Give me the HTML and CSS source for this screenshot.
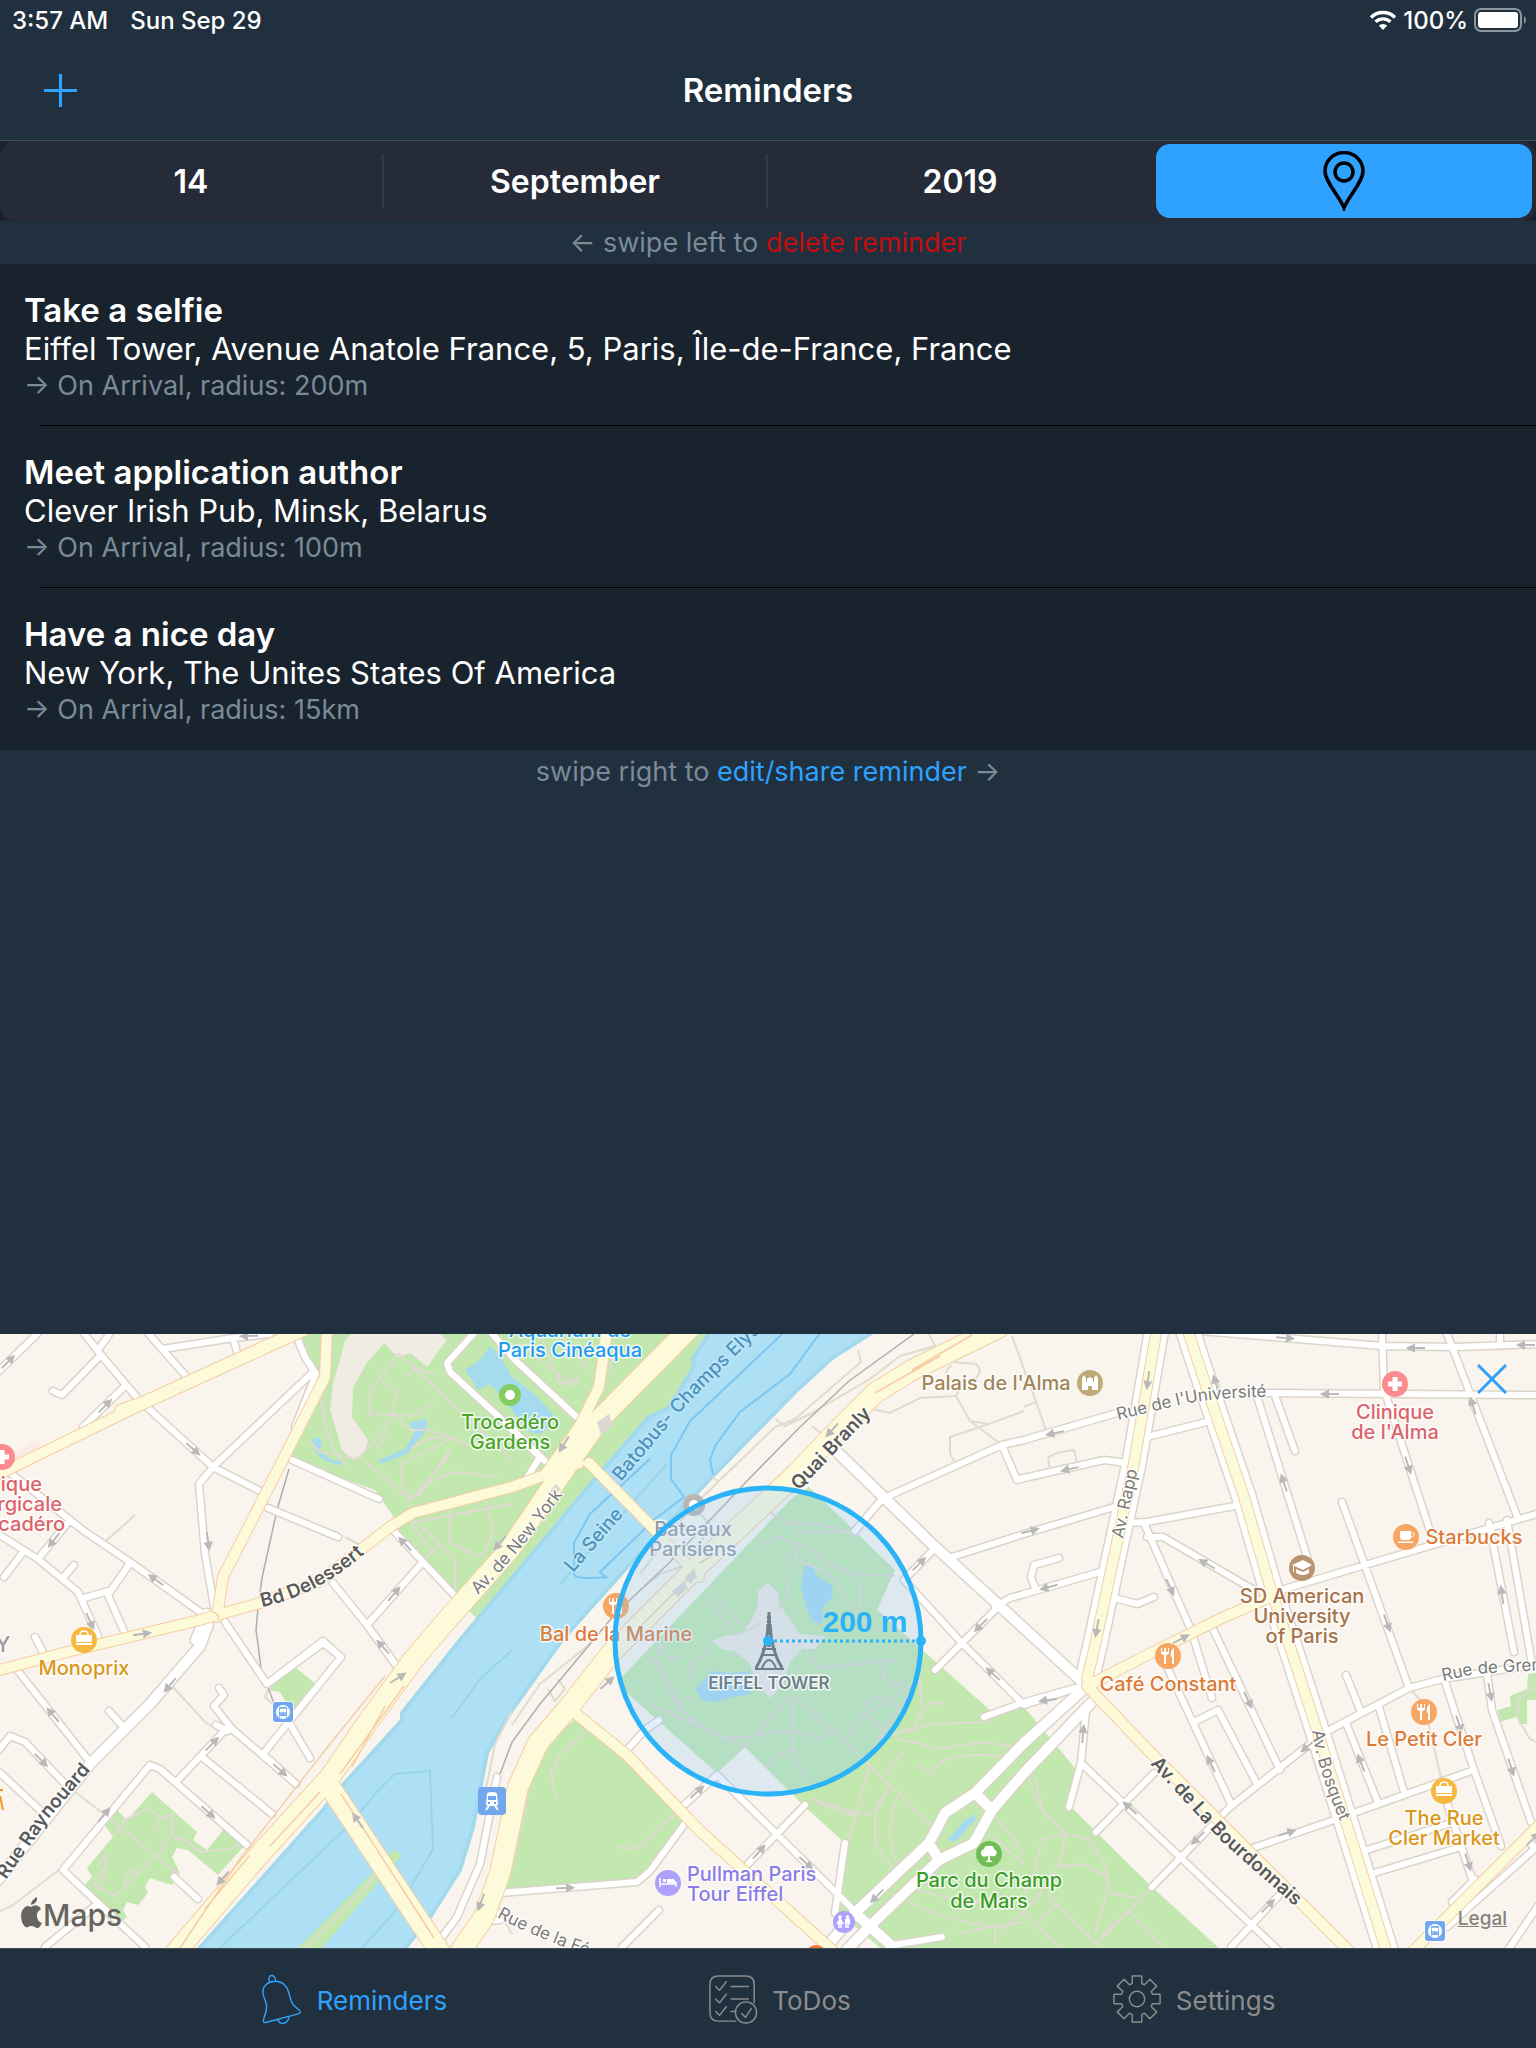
FILE: index.html
```html
<!DOCTYPE html>
<html lang="en">
<head>
    <meta charset="UTF-8">
    <meta name="viewport" content="width=device-width, initial-scale=1.0">
    <title>Reminders</title>
    <link rel="stylesheet" href="styles.css">
</head>
<body>
    <div class="status-bar">
        <div class="status-left">
            <span>3:57 AM</span>
            <span>Sun Sep 29</span>
        </div>
        <div class="status-right">
            <svg class="wifi" viewBox="0 0 28 20" aria-hidden="true">
                <path d="M2 7.500A17 17 0 0 1 26 7.500M6.500 11.800A11 11 0 0 1 21.500 11.800" fill="none" stroke="#fff" stroke-width="3.400"/>
                <path d="M14 20L9.800 15.600A6 6 0 0 1 18.200 15.600Z" fill="#fff"/>
            </svg>
            <span>100%</span>
            <svg class="battery" viewBox="0 0 54 24" aria-hidden="true">
                <rect x="1" y="1" width="46" height="22" rx="6" fill="none" stroke="#8d959d" stroke-width="2"/>
                <rect x="4" y="4" width="40" height="16" rx="3" fill="#fff"/>
                <path d="M50 8a5 5 0 0 1 0 8z" fill="#8d959d"/>
            </svg>
        </div>
    </div>

    <header class="header">
        <button class="add-btn" aria-label="Add reminder">
            <svg viewBox="0 0 32 32"><path d="M16 0V32M0 16H32" stroke="#2fa2ff" stroke-width="3"/></svg>
        </button>
        <h1>Reminders</h1>
    </header>

    <div class="segments-wrap">
        <div class="segments">
            <button class="segment">14</button>
            <button class="segment">September</button>
            <button class="segment">2019</button>
            <button class="segment active" aria-label="Location">
                <svg viewBox="0 0 42 60">
                    <path d="M21 57C17 46 2 31 2 20A19 18.500 0 0 1 40 20C40 31 25 46 21 57Z" fill="none" stroke="#000" stroke-width="3.500"/>
                    <circle cx="21" cy="21" r="9" fill="none" stroke="#000" stroke-width="3.500"/>
                </svg>
            </button>
        </div>
    </div>

    <main>
        <p class="hint">← swipe left to <span class="delete">delete reminder</span></p>
        <ul class="reminders">
            <li class="reminder">
                <h2>Take a selfie</h2>
                <p class="place">Eiffel Tower, Avenue Anatole France, 5, Paris, Île-de-France, France</p>
                <p class="radius">→ On Arrival, radius: 200m</p>
            </li>
            <li class="reminder">
                <h2>Meet application author</h2>
                <p class="place">Clever Irish Pub, Minsk, Belarus</p>
                <p class="radius">→ On Arrival, radius: 100m</p>
            </li>
            <li class="reminder">
                <h2>Have a nice day</h2>
                <p class="place">New York, The Unites States Of America</p>
                <p class="radius">→ On Arrival, radius: 15km</p>
            </li>
        </ul>
        <p class="hint">swipe right to <span class="edit">edit/share reminder</span> →</p>
    </main>

    <section class="map" aria-label="Map">
        <svg class="map-canvas" viewBox="0 0 1536 614" preserveAspectRatio="xMidYMid slice">
            <defs>
                <path id="one-way" d="M-9 0H3M2-3L8 0L2 3Z"/>

                <path id="streets" d="M37 0L-2 38M83-2L101 21L139 66L213 133L264 159M110-1L101 12L97 16M101 21L62 61L53 57M123 54L83 93V100M147-2L185 41M163 15L233 4L270 0M233 4L237 18M298 6L305 23L316 40L295 93M313 38L213 133L199 150L205 220L215 278M268 174L338 203M292 126L379 165M8 137L70 186L84 197L130 228L203 280M70 186L38 225M-2 200L38 225L78 258L98 302M24 217L4 243M74 231L62 245M130 229L108 261L126 302M81 265L108 257M35 303L48 328M393 196L455 262M422 229L367 291M333 249L367 291L398 334M225 288L267 350L323 309L341 323L263 420L296 450M267 350L323 307L341 323M290 390L310 424M18 337L90 428M109 377L125 395M-2 417L10 402L25 408L65 450M-2 437L42 478M219 354L224 361L214 372L232 395L296 450M216 391L228 397M228 393L177 447M202 423L272 480M145 613L63 536L150 431L160 435L247 511M97 570L45 613M174 543L198 565M497 443L480 530L457 583L440 606M498 559L512 558L637 548L650 537L686 488M488 570L500 580M480 588L500 586M475-2L447 29L450 38L512 95L545 127M490-3L515 26L580 86M512 96L540 123L528 142M882 165L855 197M882 165L1002 111L1024 106L1117 79M1002 111L1017 146L1024 144L1104 126L1127 129M952 223L1024 200L1114 173M995 273L1010 264L1024 260L1107 236M1059 224L1034 231L1031 243L1036 256M1111 263L1137 270L1154 263M1147 103L1214 86M1127 189L1147 188L1240 171M1144 189L1191 296L1212 364M1147 203L1163 203L1254 256M1212 293L1280 436M1167 333L1232 472M1194 388L1218 376L1257 450M1200-3L1382 12L1456 13L1540 10M1382-2L1384 55L1430 197M1446-3L1517 182M1500-2V12M1256 59L1540 61M1256 59L1308 226M1274 59L1295 117M1342 168L1409 354M1281 256L1540 179M1489 189L1514 318M1507 186L1532 330M1152 553L1230 473L1324 399L1409 354L1442 345L1540 330M1096 498L1154 439M1069 473L1081 429L1086 376M1081 429L1278 616M1231 613L1285 555M1247 516L1334 486L1474 436M1346 389L1377 466M1379 373L1404 458M1346 341L1361 378M1444 345L1474 436L1501 512M1487 340L1492 376L1531 488M1367 516L1454 488M1374 539L1461 513M1447 469L1472 545M1540 569L1508 616M625 418L645 396L659 386M682 473L717 441L889 611M745 533L805 471M845 509L835 579M622 613L659 576M935 336L962 309L995 276M935 214L904 246L962 309L1022 369M984 383L1022 369L1075 354M1077 354L1024 371M893 611L942 603M1475 545L1452 568M1540 510L1447 593M1531 510L1545 520"/>
                <path id="avenues" d="M208 290L200 312L150 370L90 430L-4 548M835 116L932 210L1087 352M1087 352L1024 409L975 459L945 479L929 509L855 579L824 616M1091 369L1024 439L992 476L974 509L939 526L869 593L846 617M975 459L992 476M929 509L939 526M855 579L893 613M207 280L196 306"/>
                <path id="boulevards" d="M1157-6L1134 129L1094 316L1087 345M1187-6L1198 28L1244 163L1271 256L1291 316L1317 396L1357 523L1386 616"/>
                <path id="majors" d="M-5 142L130 76L277 9L310-6M120 76L145 67L300-4M327-4L325 43L223 243L217 283M-4 337L67 318L200 286L217 281L260 269L318 248L363 214L390 193L413 179L512 153L545 141L579 129M607-4L599 53L579 93L545 141M589 129L655 196L699 243M575 379L627 421L699 496L832 616M1087 352L1157 316L1224 283L1271 263M1087 352L1151 419L1291 559L1350 618M1540 490L1412 618"/>
                <path id="highways" d="M690-6L599 86L570 127L510 215L447 286L413 326L370 385L330 443L260 520L176 618M998-6L912 36L875 59L839 95L795 141L699 231L612 318L569 373L538 409L518 453L500 539L484 583L460 618M330 453L440 618"/>

                <path id="t-batobus" d="M621 148L665 96Q680 78 700 57L780-22"/>
                <path id="t-seine" d="M573 239L640 162"/>
                <path id="t-branly" d="M799 157L885 66"/>
                <path id="t-newyork" d="M478 261Q522 218 576 142"/>
                <path id="t-delessert" d="M262 273Q325 260 378 207"/>
                <path id="t-universite" d="M1118 86L1175 72Q1215 62 1290 63"/>
                <path id="t-rapp" d="M1123 205L1142 115"/>
                <path id="t-bourdonnais" d="M1150 430L1221 507L1315 590"/>
                <path id="t-bosquet" d="M1312 397Q1318 440 1348 505"/>
                <path id="t-grenelle" d="M1443 347L1475 340L1560 335"/>
                <path id="t-raynouard" d="M6 546L50 483L110 414"/>
                <path id="t-federation" d="M497 583Q540 607 620 632"/>
            </defs>

            <!-- ground -->
            <rect width="1536" height="614" fill="#f9f4ed"/>
            <g class="park">
                <path d="M300 0L316 42L290 126L375 156L393 182V196L455 262L477 285L512 244L575 169L594 146L640 93L649 83L669 74L695 31L692 26L712 0Z"/>
                <path d="M152 458L197 498L193 506L207 516L223 496L245 511L218 541L188 516L177 514L172 523L180 539L172 551L150 544L145 553L148 559L138 571L127 568L123 576L127 583L120 589L83 553L92 543L87 534L113 503L103 488L115 474L127 486Z"/>
                <path d="M295 333L317 351L293 378L287 370L280 358L268 356Z"/>
                <path d="M574 386L627 421L684 476L685 489L649 539L637 551L512 559L500 556L503 539L522 453L539 419Z"/>
                <path d="M627 359L717 439L745 413L805 473L845 509L835 575L880 614H1219L1152 553L1071 473L1024 373L925 329L919 313L877 276L895 236L809 153L790 166L620 345Z"/>
                <path d="M925 329L1024 373L1071 473L1085 400L1075 372L1060 358L1024 372L984 383Z" class="ground"/>
                <path d="M919 313L1000 385L1024 373L1080 440L1069 473L1040 560L900 400Z"/>
                <path d="M1540 338L1528 340L1527 355L1510 362L1511 372L1498 376L1500 388L1519 382V390H1527V366H1540Z"/>
            </g>
            <path d="M350 0H440L447 6L427 33L410 19L397 23L384 9L367 29L353 53L352 83L368 106L365 118L353 126L342 116L330 76L333 49L340 26L345 6Z" fill="#f0ebe3"/>
            <path d="M13 119L37 106L45 115L18 130Z" fill="#fbeae7"/>

            <!-- the Seine -->
            <path class="water-edge" d="M712-5L692 26L695 31L669 74L649 83L640 93L594 146L512 244L460 306L402 379V386L343 451L323 476L196 618H402L430 583L460 536L473 493L487 419L512 376L562 306L622 239L712 143L795 58L832 24L876-4Z"/>
            <path class="park-strip" d="M393 515L402 521L322 614H298L388 523Z"/>
            <g class="water">
                <path d="M465 36L480 26L490 12L500 22L512 43L534 60L553 80L552 92L540 100L530 98L516 82L500 60L490 50L478 56L472 46Z"/>
                <path d="M312 108Q314 102 320 104L322 110L319 116L330 125L345 129L338 131L322 125L315 117Z"/>
                <path d="M427 84L426 97L411 114L407 120L380 130L378 127L393 120L405 115L415 98L409 89Z"/>
                <path d="M804 232L812 231L818 243L832 251L833 262L822 275L823 290L812 287L806 272L801 255Z"/>
                <path d="M695 355L712 337L728 339L750 337L750 360L728 364L715 368L702 366Z"/>
                <path d="M947 506L965 486L975 480V486L955 508Z"/>
            </g>
            <path d="M768 249L778 258L779 270L790 285L800 300L826 302L815 315H802L790 328L783 352L770 364L756 350L750 330L736 318L722 315L711 307L725 302L742 300L752 285L758 270V257Z" fill="#ece8e2"/>

            <g class="ferry">
                <path d="M782 0L740 40L690 87L671 121V145L684 163L655 185L600 238L606 243Q575 246 574 240V209L590 180L650 125M820-1L790 40L740 78L715 112L710 126L713 141"/>
            </g>
            <path d="M512 316L480 345L468 362L452 384M220 614L345 495M362 614L400 572L433 515L430 437L395 440L375 460L345 497M667 130L560 250" class="current"/>

            <!-- paths in the parks -->
            <g class="footpath">
                <path d="M398 19L371 57L369 80L412 82L433 69M378 44L397 56L392 82L380 101L358 125L320 118L310 108M398 19L450 68L512 125M407 42L416 34L433 40M398 80L402 90L411 96L426 96L455 104L470 112M389 100L376 116M411 114L430 104H453L402 130V150L410 165L420 160L450 115M365 127L410 165V173M418 158L450 120M410 165L435 145L455 138L500 143M292 128L340 150M322 55Q320 100 345 132M411 189L512 170M450 176L449 208L470 219L480 222Q500 205 485 165M411 189L434 220M425 224L438 212M455 262V228L420 190M540 0L560 50L580 44M520 10L572 52L580 44M560 0L590 38M610 40L612 25L640 15"/>
                <path d="M108 483L178 540M113 503L125 486L148 474L162 484L172 480L173 497L160 518L115 562L93 550L108 530L105 520L98 533M162 484L153 497M165 492L178 506L183 504L200 518L230 515L245 509M125 551V543L133 536L138 540M107 527L100 556M305 614L378 540"/>
                <path d="M570 390Q530 415 528 460L512 535M588 396L560 420L551 438L556 465M616 513L632 515L643 510L660 492L684 475"/>
                <path d="M770 178L800 197L855 199M782 188L820 190L860 202M760 211L780 203L805 213L830 230L850 240L895 242M800 211L795 225L830 240L848 270L870 295M790 213L788 260L778 275M860 245L860 275L880 300M717 265L740 290M704 260L737 302M740 300L760 290M650 325L660 330L667 350L690 385L720 403H750L770 398H800L820 405L833 396M660 335L680 375L710 400M655 330L660 310L670 325L680 323M650 345V370L745 413L790 362M683 363L690 365M690 345Q685 330 710 318M793 362V415L797 430L807 445M766 433L780 420L793 415M793 362L845 407L865 380L890 400M804 314L818 334L897 326M862 380L870 365L880 364L900 375M883 330L884 345L897 352L905 346M845 407L930 490M865 380L920 346M878 405L920 345L922 378L910 400M875 405L930 390L990 388M920 382Q925 365 945 370M895 405Q930 410 935 415L985 408L1024 415M870 432L856 479L815 466M856 479L870 480L890 452M856 479L848 510M812 464Q835 480 856 481M890 452L875 480V510L893 535M900 458Q885 490 893 520L897 530M930 440Q940 420 980 421L1003 422M903 419L885 440M917 430L930 440M1024 430L1034 460L1045 478L1065 500L1060 530L1040 560L1000 600M1034 440L1043 478L1066 500L1090 505L1105 530L1109 550L1095 600M1041 510L1035 535L1024 560M1066 500L1041 506M1060 532L1084 530L1105 542L1112 560L1138 564M1048 560L1100 614M1098 608L1150 555M1059 568L1036 592M1100 603L1128 576L1165 614M1024 580L1060 614M905 565Q950 590 995 592L1024 588M915 555L970 570L1000 560M958 600L995 592V612M985 470L1010 500L1024 520M989 500L1024 530"/>
                <path d="M1540 350L1518 365V385L1530 405L1540 410"/>
            </g>
            <g class="lane">
                <path d="M135 181L106 207M345 203L362 212M172 352L206 389L215 394M75 458L108 483M60 535L12 572L0 577M268 356L265 363L275 372M712 143L719 148M858 16L861 28L795 85L775 93L690 175L640 240M775 85L785 92L810 80L870 45L900 22L935 12L928-2M812 92L822 100M872 75L890 79L920 64L956 62L970 87L1002 111M956 62L962 50M952 31Q940 40 953 46L972 48Q985 38 976 30L953 28L948 20M970 87L989 90L1024 77M989 90L950 103V120L957 132M1012 2L1036 68L1046 96M1024 73L1036 68M1048 123L1050 137M1048 123L1060 118L1074 116L1077 128M1409 354L1424 370L1444 457L1450 475M512 391L540 350L590 310M512 376L495 410L485 460M512 600L490 560M548 355L555 367L565 355L558 345M640 256L660 240L690 230L710 190L700 180"/>
            </g>
            <path d="M289 135L277 176L262 244L258 274L256 296L258 310L261 335L275 372" class="rail"/>
            <path d="M914 0L849 47L799 94L745 149L730 165L668 230L615 280L540 370L512 408L500 440" class="rail"/>

            <!-- roads, casing first and then the surface -->
            <use href="#streets" class="street-edge"/>
            <use href="#avenues" class="avenue-edge"/>
            <use href="#boulevards" class="boulevard-edge"/>
            <use href="#streets" class="street"/>
            <use href="#avenues" class="avenue"/>
            <use href="#boulevards" class="boulevard"/>
            <use href="#boulevards" class="major-edge"/>
            <use href="#majors" class="major-edge"/>
            <use href="#highways" class="highway-edge"/>
            <use href="#majors" class="major"/>
            <use href="#boulevards" class="major"/>
            <use href="#highways" class="highway"/>
            <g class="median">
                <path d="M385 342L330 410L240 525L180 614M404 352L340 440M320 458L270 512M250 521L205 575M341 460L434 604M385 372L352 433M912 36L972 1M875 59L940 22M700 229L712 222M685 245L695 235M690 243L640 293"/>
                <path d="M213 278Q220 280 218 287"/>
            </g>
            <path d="M597 88L609 80L613 91L601 101Z" fill="#dcd8d1"/>
            <path d="M686 243L694 236L697 243L690 250Z" fill="#dcd8d1"/>
            <path d="M672 257L684 247L688 254L678 263Z" fill="#dcd8d1"/>
            <path d="M550 157L556 150L561 155L552 163Z" fill="#dcd8d1"/>

            <g class="one-ways">
                <use href="#one-way" transform="translate(8 28) rotate(-45)"/>
                <use href="#one-way" transform="translate(249 2) rotate(178)"/>
                <use href="#one-way" transform="translate(105 72) rotate(-45)"/>
                <use href="#one-way" transform="translate(193 115) rotate(42)"/>
                <use href="#one-way" transform="translate(208 207) rotate(82)"/>
                <use href="#one-way" transform="translate(54 206) rotate(128)"/>
                <use href="#one-way" transform="translate(156 246) rotate(216)"/>
                <use href="#one-way" transform="translate(90 287) rotate(65)"/>
                <use href="#one-way" transform="translate(142 300) rotate(-8)"/>
                <use href="#one-way" transform="translate(405 210) rotate(228)"/>
                <use href="#one-way" transform="translate(394 260) rotate(-50)"/>
                <use href="#one-way" transform="translate(500 209) rotate(130)"/>
                <use href="#one-way" transform="translate(383 313) rotate(228)"/>
                <use href="#one-way" transform="translate(398 344) rotate(-32)"/>
                <use href="#one-way" transform="translate(170 351) rotate(130)"/>
                <use href="#one-way" transform="translate(53 381) rotate(230)"/>
                <use href="#one-way" transform="translate(41 426) rotate(45)"/>
                <use href="#one-way" transform="translate(212 410) rotate(-45)"/>
                <use href="#one-way" transform="translate(280 436) rotate(42)"/>
                <use href="#one-way" transform="translate(208 478) rotate(42)"/>
                <use href="#one-way" transform="translate(104 481) rotate(-50)"/>
                <use href="#one-way" transform="translate(358 487) rotate(235)"/>
                <use href="#one-way" transform="translate(223 544) rotate(132)"/>
                <use href="#one-way" transform="translate(481 568) rotate(110)"/>
                <use href="#one-way" transform="translate(565 554) rotate(-2)"/>
                <use href="#one-way" transform="translate(564 110) rotate(122)"/>
                <use href="#one-way" transform="translate(832 96) rotate(132)"/>
                <use href="#one-way" transform="translate(607 349) rotate(-42)"/>
                <use href="#one-way" transform="translate(697 458) rotate(-42)"/>
                <use href="#one-way" transform="translate(759 518) rotate(-48)"/>
                <use href="#one-way" transform="translate(806 529) rotate(42)"/>
                <use href="#one-way" transform="translate(877 562) rotate(135)"/>
                <use href="#one-way" transform="translate(919 230) rotate(-45)"/>
                <use href="#one-way" transform="translate(981 291) rotate(135)"/>
                <use href="#one-way" transform="translate(993 340) rotate(222)"/>
                <use href="#one-way" transform="translate(1055 99) rotate(168)"/>
                <use href="#one-way" transform="translate(1070 135) rotate(168)"/>
                <use href="#one-way" transform="translate(1030 197) rotate(-15)"/>
                <use href="#one-way" transform="translate(1049 253) rotate(165)"/>
                <use href="#one-way" transform="translate(1148 46) rotate(98)"/>
                <use href="#one-way" transform="translate(1097 294) rotate(100)"/>
                <use href="#one-way" transform="translate(1216 50) rotate(253)"/>
                <use href="#one-way" transform="translate(1285 4) rotate(4)"/>
                <use href="#one-way" transform="translate(1416 14) rotate(180)"/>
                <use href="#one-way" transform="translate(1526 11) rotate(180)"/>
                <use href="#one-way" transform="translate(1330 60) rotate(180)"/>
                <use href="#one-way" transform="translate(1284 149) rotate(252)"/>
                <use href="#one-way" transform="translate(1408 131) rotate(72)"/>
                <use href="#one-way" transform="translate(1473 72) rotate(252)"/>
                <use href="#one-way" transform="translate(1207 230) rotate(210)"/>
                <use href="#one-way" transform="translate(1170 253) rotate(65)"/>
                <use href="#one-way" transform="translate(1181 305) rotate(-28)"/>
                <use href="#one-way" transform="translate(1387 289) rotate(70)"/>
                <use href="#one-way" transform="translate(1502 261) rotate(262)"/>
                <use href="#one-way" transform="translate(1048 366) rotate(172)"/>
                <use href="#one-way" transform="translate(1083 400) rotate(-85)"/>
                <use href="#one-way" transform="translate(1248 366) rotate(65)"/>
                <use href="#one-way" transform="translate(1211 430) rotate(245)"/>
                <use href="#one-way" transform="translate(1308 412) rotate(140)"/>
                <use href="#one-way" transform="translate(1361 429) rotate(248)"/>
                <use href="#one-way" transform="translate(1459 390) rotate(72)"/>
                <use href="#one-way" transform="translate(1490 358) rotate(80)"/>
                <use href="#one-way" transform="translate(1511 433) rotate(72)"/>
                <use href="#one-way" transform="translate(1130 474) rotate(222)"/>
                <use href="#one-way" transform="translate(1198 504) rotate(135)"/>
                <use href="#one-way" transform="translate(1287 499) rotate(-18)"/>
                <use href="#one-way" transform="translate(1468 528) rotate(72)"/>
                <use href="#one-way" transform="translate(1268 572) rotate(-45)"/>
                <use href="#one-way" transform="translate(1533 505) rotate(-45)"/>
            </g>

            <!-- street names -->
            <g class="road-name">
                <text><textPath href="#t-newyork">Av. de New York</textPath></text>
                <text><textPath href="#t-universite">Rue de l'Université</textPath></text>
                <text><textPath href="#t-rapp">Av. Rapp</textPath></text>
                <text><textPath href="#t-bosquet">Av. Bosquet</textPath></text>
                <text><textPath href="#t-grenelle">Rue de Gren</textPath></text>
                <text><textPath href="#t-federation">Rue de la Fé</textPath></text>
            </g>
            <g class="road-name bold">
                <text><textPath href="#t-branly">Quai Branly</textPath></text>
                <text><textPath href="#t-delessert">Bd Delessert</textPath></text>
                <text><textPath href="#t-bourdonnais">Av. de La Bourdonnais</textPath></text>
                <text><textPath href="#t-raynouard">Rue Raynouard</textPath></text>
            </g>
            <g class="water-name">
                <text><textPath href="#t-batobus">Batobus- Champs Elys</textPath></text>
                <text><textPath href="#t-seine">La Seine</textPath></text>
            </g>

            <!-- places -->
            <g class="poi blue">
                <text x="570" y="3">Aquarium de</text>
                <text x="570" y="23">Paris Cinéaqua</text>
            </g>
            <g class="poi green">
                <circle cx="510" cy="61" r="11" fill="#85cc63"/>
                <circle cx="510" cy="61" r="5" fill="#fff"/>
                <text x="510" y="95">Trocadéro</text>
                <text x="510" y="115">Gardens</text>
            </g>
            <g class="poi dark-green">
                <circle cx="989" cy="520" r="13" fill="#71be57"/>
                <path d="M988 519H990V526L993 528H985L988 526Z" fill="#fff"/>
                <path d="M982 522Q979 517 984 515Q985 511 989 512Q994 511 994 515Q999 518 995 522Q992 523 989 521Q985 524 982 522Z" fill="#fff"/>
                <text x="989" y="553">Parc du Champ</text>
                <text x="989" y="574">de Mars</text>
            </g>
            <g class="poi gray">
                <circle cx="694" cy="171" r="11" fill="#b9b5b0"/>
                <circle cx="694" cy="171" r="5" fill="#fff"/>
                <text x="693" y="202">Bateaux</text>
                <text x="693" y="222">Parisiens</text>
                <text x="3" y="318" class="district">Y</text>
            </g>
            <g class="poi tan">
                <circle cx="1090" cy="49" r="13" fill="#bfa975"/>
                <path d="M1082 56V44L1084 41L1086 44V48H1087V45L1090 43L1093 45V48H1094V44L1096 41L1098 44V56H1092V52H1088V56Z" fill="#fff"/>
                <text x="996" y="56">Palais de l'Alma</text>
            </g>
            <g class="poi red">
                <circle cx="1395" cy="50" r="13" fill="#fb8b90"/>
                <path d="M1388 50H1402M1395 43V57" stroke="#fff" stroke-width="5"/>
                <text x="1395" y="85">Clinique</text>
                <text x="1395" y="105">de l'Alma</text>
                <circle cx="2" cy="123" r="13" fill="#fb8b90"/>
                <path d="M-5 123H9M2 116V130" stroke="#fff" stroke-width="5"/>
                <text x="42" y="157" class="end">ique</text>
                <text x="62" y="177" class="end">rgicale</text>
                <text x="65" y="197" class="end">cadéro</text>
            </g>
            <g class="poi brown">
                <circle cx="1302" cy="234" r="13" fill="#ba936f"/>
                <path d="M1292 231L1303 226L1312 231L1303 236Z" fill="#fff"/>
                <path d="M1296 235L1303 238L1309 235V239Q1303 243 1296 239ZM1293 232H1294V238H1293Z" fill="#fff"/>
                <text x="1302" y="269">SD American</text>
                <text x="1302" y="289">University</text>
                <text x="1302" y="309">of Paris</text>
            </g>
            <g class="poi orange">
                <circle cx="1406" cy="203" r="13" fill="#f7a562"/>
                <path d="M1400 197H1411V203Q1411 206 1408 206H1403Q1400 206 1400 203ZM1398 207.500H1413V209H1398Z" fill="#fff"/>
                <path d="M1411 199Q1415 198 1414 201Q1413 203 1411 203" fill="none" stroke="#fff"/>
                <text x="1474" y="210">Starbucks</text>
                <g id="food">
                    <circle cx="1168" cy="322" r="13" fill="#f7a562"/>
                    <path d="M1161 314V318Q1161 321 1164 321V330H1166V321Q1169 321 1169 318V314H1168V318H1166V314H1164V318H1162V314ZM1174 330V314Q1170 316 1171 323H1172V330Z" fill="#fff"/>
                </g>
                <text x="1168" y="357">Café Constant</text>
                <use href="#food" x="256" y="56"/>
                <text x="1424" y="412">Le Petit Cler</text>
                <use href="#food" x="-552" y="-50"/>
                <text x="616" y="307">Bal de la Marine</text>
                <path d="M0 456H3M0 462L3 476" stroke="#f7941e" stroke-width="2"/>
                <circle cx="816" cy="622" r="11" fill="#ee7b34"/>
            </g>
            <g class="poi yellow">
                <g id="bag">
                    <circle cx="84" cy="306" r="13" fill="#f7b83f"/>
                    <path d="M76 301H92V308H76ZM76 309H92V311H76Z" fill="#fff"/>
                    <path d="M80 301Q80 297 84 297Q88 297 88 301" fill="none" stroke="#fff" stroke-width="1.500"/>
                </g>
                <text x="84" y="341">Monoprix</text>
                <use href="#bag" x="1360" y="151"/>
                <text x="1444" y="491">The Rue</text>
                <text x="1444" y="511">Cler Market</text>
            </g>
            <g class="poi purple">
                <circle cx="668" cy="549" r="13" fill="#aea1fb"/>
                <path d="M660 544V553M661 550H676M676 548V553" fill="none" stroke="#fff" stroke-width="1.500"/>
                <path d="M663 545H666V548H663ZM667 545H674L676 549H667Z" fill="#fff"/>
                <text x="687" y="547" class="start">Pullman Paris</text>
                <text x="687" y="567" class="start">Tour Eiffel</text>
                <circle cx="844" cy="588" r="11" fill="#aea1fb"/>
                <path d="M840 585L837 590M840 585L843 590M840 584V588M847 585L845 590M847 585L850 590M848 584V594M846 588V594M839 590V594M841 590V594" stroke="#fff" stroke-width="1.500"/>
                <path d="M840 584L843 590H837ZM845 585H850V589H845Z" fill="#fff"/>
                <circle cx="840" cy="583" r="1.800" fill="#fff"/>
                <circle cx="847.500" cy="583" r="1.800" fill="#fff"/>
            </g>
            <g id="metro">
                <rect x="272" y="367" width="22" height="22" rx="4" fill="#fff" opacity=".7"/>
                <rect x="273" y="368" width="20" height="20" rx="3" fill="#72a7ee"/>
                <circle cx="283" cy="378" r="7" fill="#fff"/>
                <rect x="279" y="373" width="8" height="9" rx="1" fill="#72a7ee"/>
                <path d="M280 375H286V378H280ZM280 380H282M284 380H286" fill="#fff" stroke="#fff" stroke-width=".6"/>
                <path d="M280 382L278 385M286 382L288 385" stroke="#72a7ee"/>
            </g>
            <use href="#metro" x="1152" y="219"/>
            <rect x="478" y="453" width="28" height="28" rx="4" fill="#72a7ee"/>
            <path d="M487 460Q487 458 492 458Q497 458 497 460L498 470Q498 472 496 472H488Q486 472 486 470Z" fill="#fff"/>
            <path d="M488 462H496V466H488ZM488 468H490V470H488ZM494 468H496V470H494Z" fill="#72a7ee"/>
            <path d="M489 472L486 476M495 472L498 476" stroke="#fff" stroke-width="2"/>

            <!-- alert radius -->
            <circle cx="768" cy="307" r="153" fill="#8cc4f8" fill-opacity=".25" stroke="#2bb3f8" stroke-width="5"/>

            <g class="tower">
                <path d="M769 278V292M768 290Q767 316 756 334M770 290Q771 316 782 334" fill="none" stroke="#6e7f8c" stroke-width="3"/>
                <path d="M769 282V314" stroke="#6e7f8c" stroke-width="4" stroke-dasharray="3 1"/>
                <path d="M762 315H776M761 321H777M755 335H784" stroke="#6e7f8c" stroke-width="2"/>
                <path d="M762 334Q769 318 776 334" fill="none" stroke="#6e7f8c" stroke-width="2"/>
                <text x="769" y="355">EIFFEL TOWER</text>
            </g>
            <path d="M768 307H921" stroke="#2bb3f8" stroke-width="3" stroke-dasharray="3 3"/>
            <circle cx="768" cy="307" r="5" fill="#2bb3f8"/>
            <circle cx="921" cy="307" r="5" fill="#2bb3f8"/>
            <text x="865" y="298" class="distance">200 m</text>

            <g class="maps-logo">
                <path d="M31 573Q35 570 38 572Q40 573 41 575Q36 578 37 583Q38 588 42 589Q38 597 35 593Q31 591 28 593Q25 595 22 588Q19 578 25 573Q28 571 31 573ZM31 571Q31 566 37 563Q38 569 31 571Z"/>
                <text x="43" y="592">Maps</text>
            </g>
        </svg>
        <button class="close-btn" aria-label="Close map">
            <svg viewBox="0 0 30 30"><path d="M1 1L29 29M29 1L1 29" stroke="#2fa2ff" stroke-width="3"/></svg>
        </button>
        <a class="legal" href="#legal">Legal</a>
    </section>

    <nav class="tabs">
        <a class="tab active" href="#reminders">
            <svg class="bell" viewBox="0 0 42 52">
                <path d="M8 8.500C5 0 14-1 14.500 7.500M2.500 50.500C-1 49 5 43 5 34C5 27 1 24 1 19C1 12 7 7.500 14 7.500C21 7.500 26 12 28 19C30 26 30 31 37 36C42 39 40 41 36 42L4 50.500ZM17 47.500C18 54 28 52 28 44.500"/>
            </svg>
            <span>Reminders</span>
        </a>
        <a class="tab" href="#todos">
            <svg viewBox="0 0 52 52">
                <path d="M29 49H11Q2 49 2 40V11Q2 2 11 2H39Q48 2 48 11V30M8 13L12 17L19 8M8 26L12 30L19 21M8 39L12 43L19 34M24 13H42M24 26H42M24 39H29"/>
                <circle cx="39.500" cy="40" r="11"/>
                <path d="M35 41L39 45L45 36"/>
            </svg>
            <span>ToDos</span>
        </a>
        <a class="tab" href="#settings">
            <svg viewBox="-26 -26 52 52">
                <path d="M-5-16V-24H5V-16L7.800-14.800L13.400-20.500L20.500-13.400L14.800-7.800L16-5H24V5H16L14.800 7.800L20.500 13.400L13.400 20.500L7.800 14.800L5 16V24H-5V16L-7.800 14.800L-13.400 20.500L-20.500 13.400L-14.800 7.800L-16 5H-24V-5H-16L-14.800-7.800L-20.500-13.400L-13.400-20.500L-7.800-14.800Z"/>
                <circle r="8"/>
            </svg>
            <span>Settings</span>
        </a>
    </nav>
</body>
</html>
```
FILE: styles.css
```css
* {
    box-sizing: border-box;
    margin: 0;
    padding: 0;
}

body {
    font-family: Inter, "Liberation Sans", sans-serif;
    background-color: #20303e;
    color: #fff;
    min-height: 100vh;
    display: flex;
    flex-direction: column;
}

button {
    font: inherit;
    color: inherit;
    background: none;
    border: none;
    cursor: pointer;
}

svg {
    display: block;
}

/* Status bar */
.status-bar {
    display: flex;
    justify-content: space-between;
    align-items: center;
    height: 40px;
    padding: 0 8px 0 12px;
    font-size: 24px;
    font-weight: 500;
}

.status-left {
    display: flex;
    gap: 22px;
}

.status-right {
    display: flex;
    align-items: center;
    gap: 6px;
}

.wifi {
    width: 28px;
    height: 20px;
}

.battery {
    width: 54px;
    height: 24px;
}

/* Header */
.header {
    display: grid;
    grid-template-columns: 1fr auto 1fr;
    align-items: center;
    height: 101px;
    border-bottom: 1px solid #454f5a;
}

.header h1 {
    font-size: 33px;
    font-weight: 600;
}

.add-btn {
    justify-self: start;
    padding: 0 44px;
}

.add-btn svg {
    width: 33px;
    height: 33px;
}

/* Date segments */
.segments-wrap {
    background-color: #19232d;
}

.segments {
    display: grid;
    grid-template-columns: repeat(4, 1fr);
    align-items: center;
    height: 80px;
    background-color: #252b37;
    border-radius: 16px;
}

.segment {
    height: 54px;
    font-size: 32px;
    font-weight: 600;
    border-right: 2px solid #333a46;
}

.segment:nth-child(3) {
    border-right: none;
}

.segment.active {
    display: flex;
    align-items: center;
    justify-content: center;
    height: 74px;
    margin: 0 4px;
    background-color: #2fa2ff;
    border: none;
    border-radius: 14px;
}

.segment.active svg {
    width: 42px;
    height: 60px;
}

/* Reminders list */
main {
    flex: 1;
}

.hint {
    text-align: center;
    font-size: 27px;
    line-height: 43px;
    color: #7a8a97;
}

.hint .delete {
    color: #c30d10;
}

.hint .edit {
    color: #2fa2ff;
}

.reminders {
    list-style: none;
    background-color: #19232d;
}

.reminder {
    position: relative;
    padding: 26px 24px 22px;
}

.reminder:not(:last-child)::after {
    content: "";
    position: absolute;
    left: 40px;
    right: 0;
    bottom: 0;
    height: 1px;
    background-color: #000;
}

.reminder h2 {
    font-size: 33px;
    line-height: 40px;
    font-weight: 600;
}

.place {
    font-size: 31px;
    line-height: 38px;
}

.radius {
    font-size: 27px;
    line-height: 36px;
    color: #7a8a97;
}

/* Map */
.map {
    position: relative;
    aspect-ratio: 1536 / 614;
    overflow: hidden;
}

.map-canvas {
    width: 100%;
    height: 100%;
}

.park,
.park-strip {
    fill: #c2e8b0;
}

.ground {
    fill: #f9f4ed;
}

.water {
    fill: #a5daef;
}

.water-edge {
    fill: #ade0f5;
    stroke: #a3d9ed;
    stroke-width: 4;
}

.ferry,
.current {
    fill: none;
    stroke: #7cc6f2;
    stroke-width: 2;
}

.current {
    stroke: #9bd4ea;
}

.footpath,
.lane {
    fill: none;
    stroke: #e0dad3;
    stroke-width: 2;
}

.lane {
    stroke: #dfdccf;
}

.rail {
    fill: none;
    stroke: #b0aeab;
    stroke-width: 1.5;
}

.street-edge,
.street,
.avenue-edge,
.avenue,
.boulevard-edge,
.boulevard,
.major-edge,
.major,
.highway-edge,
.highway {
    fill: none;
    stroke-linecap: round;
    stroke-linejoin: round;
}

.street-edge {
    stroke: #dbd4ca;
    stroke-width: 9;
}

.street {
    stroke: #fff;
    stroke-width: 6;
}

.avenue-edge {
    stroke: #dbd4ca;
    stroke-width: 13;
}

.avenue {
    stroke: #fff;
    stroke-width: 10;
}

.boulevard-edge {
    stroke: #dbd4ca;
    stroke-width: 26;
}

.boulevard {
    stroke: #fff;
    stroke-width: 23;
}

.major-edge {
    stroke: #f6cda5;
    stroke-width: 12;
}

.major {
    stroke: #fdfad9;
    stroke-width: 10;
}

.highway-edge {
    stroke: #f6cda5;
    stroke-width: 22;
}

.highway {
    stroke: #fdfad9;
    stroke-width: 20;
}

.median {
    fill: none;
    stroke: #f6cda5;
    stroke-width: 1.5;
}

.one-ways {
    fill: #b9b9b9;
    stroke: #b9b9b9;
    stroke-width: 2;
}

.map text {
    paint-order: stroke;
    stroke: #fff;
    stroke-opacity: 0.8;
    stroke-width: 3px;
    stroke-linejoin: round;
}

.road-name {
    font-size: 17px;
    fill: #7b7b7b;
}

.road-name.bold {
    font-size: 19px;
    font-weight: 600;
    fill: #5a5a5a;
}

.water-name {
    font-size: 19px;
    font-weight: 500;
    fill: #4b93c0;
}

.map .water-name text {
    stroke: #c5e8f6;
}

.poi {
    font-size: 20px;
    font-weight: 500;
    text-anchor: middle;
}

.poi .end {
    text-anchor: end;
}

.poi .start {
    text-anchor: start;
}

.poi.blue { fill: #1e9bf5; }
.poi.green { fill: #4ca529; }
.poi.dark-green { fill: #3a9d25; }
.poi.gray { fill: #9b9b9b; }
.poi.tan { fill: #a08658; }
.poi.red { fill: #dd636b; }
.poi.brown { fill: #a5734a; }
.poi.orange { fill: #dd7b38; }
.poi.yellow { fill: #db9719; }
.poi.purple { fill: #8a7ce6; }

.poi .district {
    font-size: 22px;
}

.tower {
    font-size: 17px;
    font-weight: 600;
    fill: #6e7f8c;
    text-anchor: middle;
}

.map .distance {
    font-family: "Liberation Sans", Arial, sans-serif;
    font-size: 30px;
    font-weight: bold;
    fill: #2bb3f8;
    stroke: none;
    text-anchor: middle;
}

.maps-logo {
    font-size: 30px;
    font-weight: 500;
    fill: #666460;
}

.map .maps-logo text {
    stroke: none;
}

.close-btn {
    position: absolute;
    top: 30px;
    right: 29px;
}

.close-btn svg {
    width: 30px;
    height: 30px;
}

.legal {
    position: absolute;
    right: 29px;
    bottom: 18px;
    font-size: 19px;
    font-weight: 500;
    color: #85827e;
}

/* Bottom tabs */
.tabs {
    display: flex;
    justify-content: center;
    gap: 17%;
    height: 100px;
    border-top: 1px solid #454f5a;
}

.tab {
    display: flex;
    align-items: center;
    gap: 14px;
    font-size: 26px;
    color: #8c8c8c;
    text-decoration: none;
}

.tab svg {
    width: 50px;
    height: 50px;
    fill: none;
    stroke: currentColor;
    stroke-width: 1.5;
    stroke-linecap: round;
    stroke-linejoin: round;
}

.tab span {
    padding-top: 4px;
}

.tab .bell {
    width: 42px;
}

.tab.active {
    color: #2fa2ff;
}
```
